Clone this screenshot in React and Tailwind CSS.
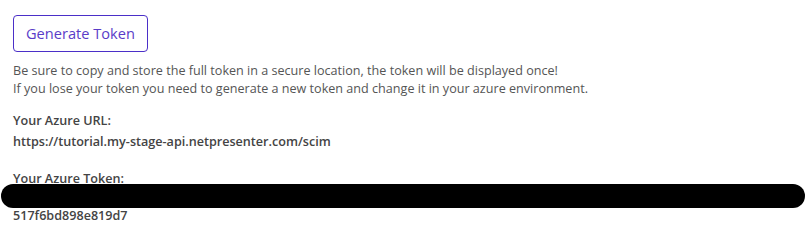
export default function App() {
  return (
    <div className="relative h-[239px] w-[805px] bg-white px-[13px] pt-[15px] text-[12.6px] text-[#555] [font-family:'Open_Sans',sans-serif]">
      <button className="h-[37px] rounded-[4px] border border-[#4b2fc8] px-[12px] text-[14.6px] text-[#5a3cc8]">
        Generate Token
      </button>
      <div className="mt-[10px] leading-[18px]">
        <p>Be sure to copy and store the full token in a secure location, the token will be displayed once!</p>
        <p>If you lose your token you need to generate a new token and change it in your azure environment.</p>
      </div>
      <div className="mt-[12px] font-semibold leading-[21px] text-[#444]">
        <p>Your Azure URL:</p>
        <p>https://tutorial.my-stage-api.netpresenter.com/scim</p>
        <p className="mt-[16px]">Your Azure Token:</p>
        <p className="mt-[16px]">517f6bd898e819d7</p>
      </div>
      <div className="absolute left-[1px] top-[184px] h-[24px] w-[804px] rounded-full bg-black" />
    </div>
  )
}
